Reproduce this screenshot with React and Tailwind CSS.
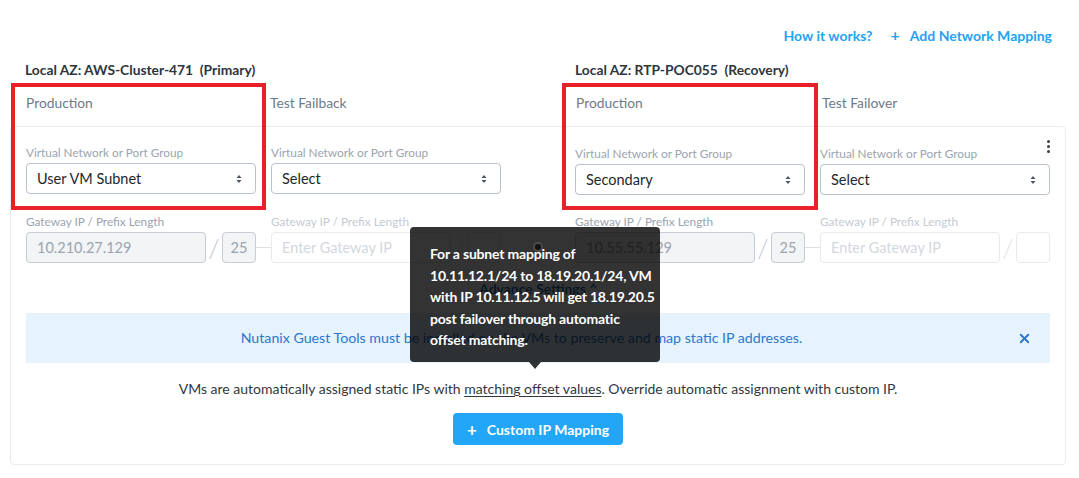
import { X } from 'lucide-react'

const font = { fontFamily: 'Lato, "Open Sans", sans-serif' }

const Updown = () => (
  <svg width="8" height="10" viewBox="0 0 8 10" className="shrink-0">
    <path d="M4 1 L6.5 4 H1.5 Z" fill="#4b5563" />
    <path d="M4 9 L6.5 6 H1.5 Z" fill="#4b5563" />
  </svg>
)

const SelectBox = ({ value }) => (
  <div className="h-[31px] w-[230px] rounded-[4px] border border-[#b9c1cc] bg-white flex items-center justify-between pl-[10px] pr-[12px]">
    <span className="text-[14.5px] text-[#22272e]">{value}</span>
    <Updown />
  </div>
)

const Field = ({ label, faded, children }) => (
  <div className="flex flex-col">
    <div className={`text-[11.8px] leading-[14px] mb-[3px] ${faded ? 'text-[#c4cad2]' : 'text-[#9aa4b0]'}`}>{label}</div>
    {children}
  </div>
)

const GatewayFilled = ({ ip, prefix }) => (
  <div className="flex items-center w-[230px]">
    <div className="h-[31px] w-[180px] rounded-[4px] border border-[#c6cdd6] bg-[#f2f4f6] flex items-center pl-[10px] text-[14.5px] text-[#9ba4af]">{ip}</div>
    <div className="w-[16px] text-center text-[26px] font-light leading-none text-[#c3c9d1]">/</div>
    <div className="h-[31px] w-[34px] rounded-[4px] border border-[#c6cdd6] bg-[#f2f4f6] flex items-center justify-center text-[14.5px] text-[#9ba4af]">{prefix}</div>
  </div>
)

const GatewayEmpty = () => (
  <div className="flex items-center w-[230px]">
    <div className="h-[31px] w-[180px] rounded-[4px] border border-[#e7eaee] bg-white flex items-center pl-[10px] text-[14.5px] text-[#d3d8de]">Enter Gateway IP</div>
    <div className="w-[16px] text-center text-[26px] font-light leading-none text-[#e1e4e8]">/</div>
    <div className="h-[31px] w-[34px] rounded-[4px] border border-[#e7eaee] bg-white" />
  </div>
)

const Connector = () => <div className="w-[15px] h-px bg-[#dde1e6]" />

export default function App() {
  return (
    <div className="relative w-[1079px] h-[478px] bg-white overflow-hidden" style={font}>
      {/* top links */}
      <div className="flex justify-end items-center gap-[18px] pt-[26px] pr-[27px] h-[44px] text-[14px] font-bold text-[#1fa3f2]">
        <span>How it works?</span>
        <span className="flex items-center gap-[10px]"><span className="text-[16px] leading-none">+</span>Add Network Mapping</span>
      </div>

      <div className="pl-[10px] pr-[13px]">
        {/* AZ titles */}
        <div className="flex pl-[15px] pt-[18px] text-[13.8px] font-bold text-[#2d3540] leading-[16px]">
          <div className="w-[550px]">Local AZ: AWS-Cluster-471&nbsp;&nbsp;(Primary)</div>
          <div>Local AZ: RTP-POC055&nbsp;&nbsp;(Recovery)</div>
        </div>

        {/* tabs */}
        <div className="flex pl-[16px] h-[48px] items-center text-[13.8px] text-[#6e7a88] pt-[2px]">
          <div className="w-[244px]">Production</div>
          <div className="w-[306px]">Test Failback</div>
          <div className="w-[246px]">Production</div>
          <div>Test Failover</div>
        </div>

        {/* card */}
        <div className="relative rounded-[4px] border border-[#e9ecef] px-[15px] pt-[19px] pb-[19px]">
          <div className="absolute right-[15px] top-[13px] flex flex-col gap-[2px]">
            <span className="w-[3px] h-[3px] rounded-full bg-[#3a3f46]" />
            <span className="w-[3px] h-[3px] rounded-full bg-[#3a3f46]" />
            <span className="w-[3px] h-[3px] rounded-full bg-[#3a3f46]" />
          </div>

          <div className="flex justify-between">
            <div className="flex gap-[15px]">
              <Field label="Virtual Network or Port Group"><SelectBox value="User VM Subnet" /></Field>
              <Field label="Virtual Network or Port Group"><SelectBox value="Select" /></Field>
            </div>
            <div className="flex gap-[15px] pt-[1px]">
              <Field label="Virtual Network or Port Group"><SelectBox value="Secondary" /></Field>
              <Field label="Virtual Network or Port Group"><SelectBox value="Select" /></Field>
            </div>
          </div>

          <div className="flex justify-between mt-[20px]">
            <div className="flex items-end">
              <Field label="Gateway IP / Prefix Length"><GatewayFilled ip="10.210.27.129" prefix="25" /></Field>
              <div className="h-[16px] flex items-start"><Connector /></div>
              <Field label="Gateway IP / Prefix Length" faded><GatewayEmpty /></Field>
            </div>
            <div className="flex items-end">
              <Field label="Gateway IP / Prefix Length"><GatewayFilled ip="10.55.55.129" prefix="25" /></Field>
              <div className="h-[16px] flex items-start"><Connector /></div>
              <Field label="Gateway IP / Prefix Length" faded><GatewayEmpty /></Field>
            </div>
          </div>

          <div className="mt-[15px] h-[20px] flex justify-center items-center gap-[4px] text-[14px] font-semibold text-[#2268b5]">
            Advance Settings <span className="text-[12px]">^</span>
          </div>

          <div className="mt-[15px] h-[50px] bg-[#e6f3fd] flex items-center">
            <div className="flex-1 text-center text-[14.2px] text-[#2b78cc]">Nutanix Guest Tools must be installed on the VMs to preserve and map static IP addresses.</div>
            <X className="w-[15px] h-[15px] text-[#2b78cc] mr-[18px]" strokeWidth={3} />
          </div>

          <div className="mt-[15px] h-[20px] text-center text-[14px] text-[#313840]">
            VMs are automatically assigned static IPs with <span className="underline underline-offset-2">matching offset values</span>. Override automatic assignment with custom IP.
          </div>

          <div className="mt-[15px] flex justify-center">
            <div className="h-[32px] px-[14px] rounded-[4px] bg-[#22a6f7] flex items-center gap-[10px] text-white text-[14px] font-bold">
              <span className="text-[17px] leading-none">+</span>Custom IP Mapping
            </div>
          </div>
        </div>
      </div>

      {/* red highlight boxes */}
      <div className="absolute left-[11px] top-[83px] w-[255px] h-[127px] border-4 border-[#e8202a]" />
      <div className="absolute left-[562px] top-[83px] w-[256px] h-[127px] border-4 border-[#e8202a]" />

      {/* tooltip */}
      <div className="absolute left-[410px] top-[227px] w-[250px] rounded-[4px] bg-black/80 pl-[20px] pr-[6px] pt-[16px] pb-[11px] text-white text-[14px] font-bold leading-[21.6px] whitespace-nowrap tracking-[-0.2px]">
        For a subnet mapping of<br />
        10.11.12.1/24 to 18.19.20.1/24, VM<br />
        with IP 10.11.12.5 will get 18.19.20.5<br />
        post failover through automatic<br />
        offset matching.
        <div className="absolute left-[119px] -bottom-[7px] w-0 h-0 border-x-[6px] border-x-transparent border-t-[7px] border-t-black/80" />
      </div>
      <div className="absolute left-[535px] top-[244px] w-[6px] h-[6px] rounded-full bg-[#111] ring-2 ring-[#4a4a4a]" />
    </div>
  )
}
